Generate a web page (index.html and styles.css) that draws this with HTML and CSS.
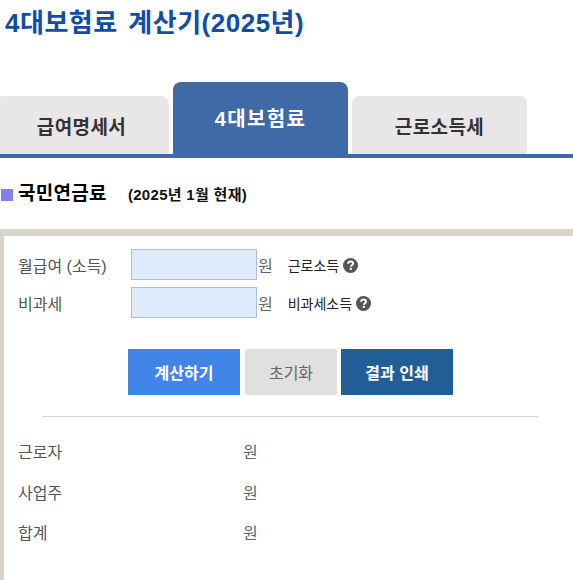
FILE: index.html
```html
<!DOCTYPE html>
<html lang="ko">
<head>
    <meta charset="UTF-8">
    <meta name="viewport" content="width=device-width, initial-scale=1.0">
    <title>4대보험료 계산기(2025년)</title>
    <link rel="stylesheet" href="styles.css">
</head>
<body>
    <h1 class="title">4대보험료 계산기(2025년)</h1>

    <!-- 탭 -->
    <div class="tabs">
        <a class="tab" href="#">급여명세서</a>
        <a class="tab tab-on" href="#">4대보험료</a>
        <a class="tab" href="#">근로소득세</a>
    </div>

    <div class="head">
        <span class="mark"></span>
        <h2 class="head-name">국민연금료</h2>
        <span class="head-date">(2025년 1월 현재)</span>
    </div>

    <div class="panel">
        <div class="form">
            <div class="row">
                <label class="row-name">월급여 (소득)</label>
                <input class="money" type="text">
                <span class="unit">원</span>
                <span class="hint">근로소득
                    <svg class="help" viewBox="0 0 14 14"><circle cx="7" cy="7" r="7" fill="#555"/><path d="M4.7 5.4C4.8 4 5.8 3.3 7.1 3.3C8.5 3.3 9.4 4.1 9.4 5.2C9.4 6.6 7.3 6.8 7.3 8.2" fill="none" stroke="#fff" stroke-width="1.8"/><rect x="6.3" y="9.2" width="2" height="1.9" fill="#fff"/></svg>
                </span>
            </div>
            <div class="row">
                <label class="row-name">비과세</label>
                <input class="money" type="text">
                <span class="unit">원</span>
                <span class="hint">비과세소득
                    <svg class="help" viewBox="0 0 14 14"><circle cx="7" cy="7" r="7" fill="#555"/><path d="M4.7 5.4C4.8 4 5.8 3.3 7.1 3.3C8.5 3.3 9.4 4.1 9.4 5.2C9.4 6.6 7.3 6.8 7.3 8.2" fill="none" stroke="#fff" stroke-width="1.8"/><rect x="6.3" y="9.2" width="2" height="1.9" fill="#fff"/></svg>
                </span>
            </div>
        </div>

        <div class="btns">
            <button class="btn btn-calc" type="button">계산하기</button>
            <button class="btn btn-reset" type="button">초기화</button>
            <button class="btn btn-print" type="button">결과 인쇄</button>
        </div>

        <hr class="line">

        <div class="result">
            <div class="result-row"><span class="result-name">근로자</span><span class="unit">원</span></div>
            <div class="result-row"><span class="result-name">사업주</span><span class="unit">원</span></div>
            <div class="result-row"><span class="result-name">합계</span><span class="unit">원</span></div>
        </div>
    </div>
</body>
</html>
```

FILE: styles.css
```css
*{
    margin: 0;
    padding: 0;
    box-sizing: border-box;
}
body{
    width: 573px;
    height: 580px;
    overflow: hidden;
    background-color: #fff;
    font-family: "Liberation Sans", "Noto Sans CJK KR", sans-serif;
}
.title{
    height: 82px;
    padding: 7px 0 0 5px;
    font-size: 26px;
    line-height: 32px;
    letter-spacing: 0.5px;
    word-spacing: 3px;
    color: #0f4ea3;
}
/* 탭 */
.tabs{
    display: flex;
    align-items: flex-end;
    gap: 4px;
    height: 76px;
    margin-left: -6px;
    border-bottom: 4px solid #3f6aa6;
    width: 579px;
}
.tab{
    display: block;
    width: 175px;
    height: 58px;
    padding-top: 19px;
    background-color: #e8e6e6;
    border-radius: 8px 8px 0 0;
    text-align: center;
    font-size: 19px;
    line-height: 26px;
    letter-spacing: 0.4px;
    font-weight: bold;
    color: #333;
    text-decoration: none;
}
.tab-on{
    height: 72px;
    padding-top: 24px;
    background-color: #3f6aa6;
    font-size: 20px;
    letter-spacing: 1.4px;
    color: #fff;
}
.head{
    display: flex;
    align-items: center;
    height: 71px;
    padding: 0 0 0 1px;
}
.mark{
    width: 12px;
    height: 12px;
    margin-top: 3px;
    background-color: #8080f0;
}
.head-name{
    margin-left: 5px;
    font-size: 19px;
    line-height: 24px;
    letter-spacing: 0.3px;
    color: #000;
}
.head-date{
    margin-left: 21px;
    font-size: 15px;
    letter-spacing: 0.3px;
    font-weight: bold;
    color: #111;
}
.panel{
    height: 351px;
    padding: 13px 0 0 14px;
    border-top: 7px solid #d9d4c8;
    border-left: 4px solid #d9d4c8;
}
.form{
    display: flex;
    flex-direction: column;
    gap: 7px;
}
.row{
    display: flex;
    align-items: center;
    height: 31px;
}
.row-name{
    width: 113px;
    font-size: 16px;
    color: #555;
}
.money{
    width: 126px;
    height: 31px;
    background-color: #dfeafa;
    border: 1px solid #a9bde0;
}
.unit{
    font-size: 16px;
    color: #666;
}
.row .unit{
    margin-left: 1px;
}
.hint{
    display: flex;
    align-items: center;
    gap: 4px;
    margin-left: 15px;
    padding-top: 1px;
    font-size: 14px;
    font-weight: normal;
    color: #222;
}
.help{
    width: 15px;
    height: 15px;
}
.btns{
    display: flex;
    margin: 31px 0 0 110px;
}
.btn{
    height: 46px;
    border: 0;
    font-family: inherit;
    font-size: 16px;
    font-weight: bold;
    color: #fff;
}
.btn-calc{
    width: 112px;
    background-color: #4285e8;
}
.btn-reset{
    width: 92px;
    margin: 0 4px 0 5px;
    background-color: #e0e0e0;
    border-radius: 3px;
    font-weight: normal;
    color: #666;
}
.btn-print{
    width: 112px;
    background-color: #215e96;
}
.line{
    width: 497px;
    margin: 21px 0 0 24px;
    border: 0;
    border-top: 1px solid #d4d4d4;
}
.result{
    margin-top: 14px;
}
.result-row{
    display: flex;
    align-items: center;
    height: 40.5px;
}
.result-name{
    width: 225px;
    font-size: 16px;
    color: #555;
}
```
